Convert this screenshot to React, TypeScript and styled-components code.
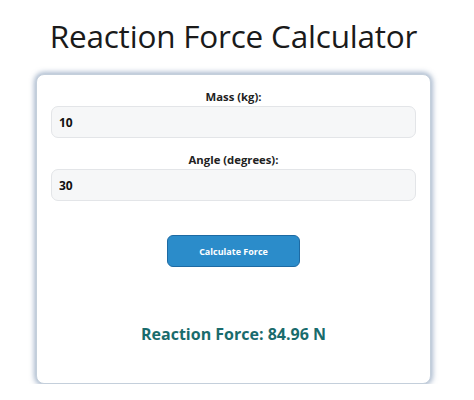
import React from "react";
import styled, { createGlobalStyle } from "styled-components";

const Global = createGlobalStyle`
  html, body { margin: 0; padding: 0; background: #ffffff; }
  body { font-family: "Open Sans", "Noto Sans", sans-serif; }
`;

const Page = styled.div`
  width: 467px;
  display: flex;
  flex-direction: column;
  align-items: center;
`;

const Title = styled.h1`
  margin: 14px 0 0;
  font-family: "Open Sans", "Noto Sans", sans-serif;
  font-weight: 400;
  font-size: 31.5px;
  line-height: 44px;
  color: #1a1a1a;
  letter-spacing: -0.2px;
`;

const Card = styled.div`
  box-sizing: border-box;
  width: 395px;
  margin-top: 16px;
  padding: 14px 14px 0;
  height: 310px;
  border: 1px solid #c4cfdb;
  border-radius: 8px;
  background: #fff;
  box-shadow: 0 0 5px 2px rgba(90, 120, 160, 0.5);
  display: flex;
  flex-direction: column;
`;

const Field = styled.div`
  display: flex;
  flex-direction: column;
  align-items: center;
  margin-bottom: ${(p: { gap: number }) => p.gap}px;
`;

const Label = styled.label`
  font-size: 11.3px;
  font-weight: 700;
  line-height: 16px;
  color: #222;
  margin-bottom: 1px;
`;

const Input = styled.input`
  box-sizing: border-box;
  width: 100%;
  height: 32px;
  padding: 0 7px;
  border: 1px solid #e3e5e8;
  border-radius: 7px;
  background: #f6f7f8;
  font-family: "Open Sans", "Noto Sans", sans-serif;
  font-size: 12px;
  font-weight: 700;
  color: #111;
  outline: none;
`;

const Button = styled.button`
  align-self: center;
  margin-top: 34px;
  width: 133px;
  height: 32px;
  border: 1px solid #1d6aa3;
  border-radius: 6px;
  background: #2b8cca;
  color: #fff;
  font-family: "Open Sans", "Noto Sans", sans-serif;
  font-size: 9px;
  font-weight: 700;
  cursor: pointer;
`;

const Result = styled.div`
  margin-top: 55px;
  text-align: center;
  font-size: 16px;
  font-weight: 700;
  color: #196b6c;
  line-height: 24px;
`;

export default function App() {
  return (
    <>
      <Global />
      <Page>
        <Title>Reaction Force Calculator</Title>
        <Card>
          <Field gap={14}>
            <Label>Mass (kg):</Label>
            <Input defaultValue="10" />
          </Field>
          <Field gap={0}>
            <Label>Angle (degrees):</Label>
            <Input defaultValue="30" />
          </Field>
          <Button>Calculate Force</Button>
          <Result>Reaction Force: 84.96 N</Result>
        </Card>
      </Page>
    </>
  );
}
